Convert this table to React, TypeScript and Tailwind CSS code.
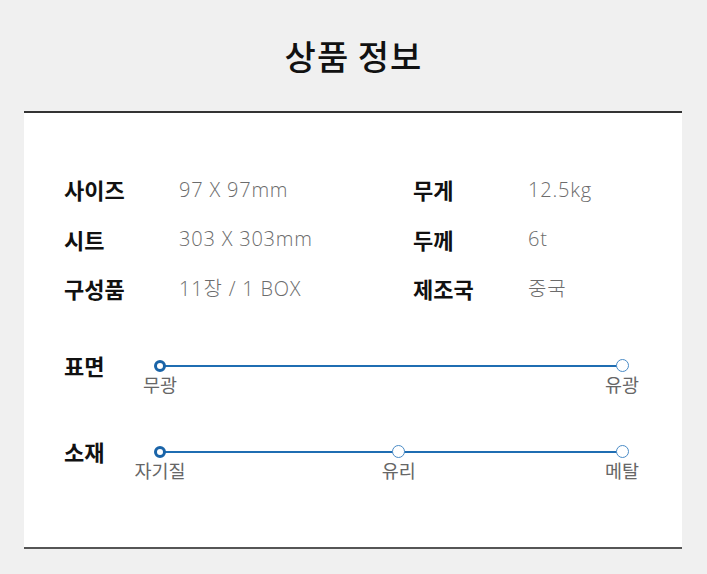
const specs = [
  ["사이즈", "97 X 97mm", "무게", "12.5kg"],
  ["시트", "303 X 303mm", "두께", "6t"],
  ["구성품", "11장 / 1 BOX", "제조국", "중국"],
]

const scales = [
  { label: "표면", stops: [{ pos: 0, text: "무광" }, { pos: 100, text: "유광" }] },
  { label: "소재", stops: [{ pos: 0, text: "자기질" }, { pos: 51.7, text: "유리" }, { pos: 100, text: "메탈" }] },
]

const kr = { fontFamily: '"Noto Sans CJK KR", "Noto Sans", sans-serif' }
const val = { fontFamily: '"Open Sans", "Noto Sans CJK KR", sans-serif' }

function Scale({ label, stops }: { label: string; stops: { pos: number; text: string }[] }) {
  return (
    <div className="flex items-start h-[86px]">
      <div className="w-[96px] h-[40px] flex items-center text-[22px] font-bold text-[#111]" style={kr}>{label}</div>
      {/* track */}
      <div className="relative w-[462px] h-[40px] flex items-center">
        <div className="w-full h-[2px] bg-[#1f6db2]" />
        {stops.map((s, i) => (
          <div key={s.text} className="absolute top-[13.5px] w-0 flex flex-col items-center" style={{ left: `${s.pos}%` }}>
            {i === 0 ? (
              <div className="shrink-0 w-[12px] h-[12px] my-[0.5px] rounded-full bg-white border-[3px] border-[#1a64a8]" />
            ) : (
              <div className="shrink-0 w-[13px] h-[13px] rounded-full bg-white border-[1.5px] border-[#4a8bc6]" />
            )}
            <div className="whitespace-nowrap text-[18.5px] leading-[24px] text-[#666]" style={kr}>{s.text}</div>
          </div>
        ))}
      </div>
    </div>
  )
}

export default function App() {
  return (
    <div className="w-[707px] h-[574px] bg-[#f0f0f0] overflow-hidden">
      {/* Title */}
      <div className="h-[111px] flex items-center justify-center">
        <h1 className="text-[34px] font-medium text-[#111] tracking-[1px]" style={kr}>상품 정보</h1>
      </div>
      {/* Panel */}
      <div className="ml-[24px] mr-[25px] h-[438px] bg-white border-t-2 border-[#333] border-b-2 border-b-[#555] pl-[40px]">
        <div className="pt-[52px] grid grid-cols-[115px_234px_115px_1fr]">
          {specs.map(row => (
            <div key={row[0]} className="contents">
              <div className="h-[49.5px] flex items-center text-[22px] font-bold text-[#111]" style={kr}>{row[0]}</div>
              <div className="h-[49.5px] flex items-center text-[20px] font-light tracking-[0.8px] text-[#6c6c6c]" style={val}>{row[1]}</div>
              <div className="h-[49.5px] flex items-center text-[22px] font-bold text-[#111]" style={kr}>{row[2]}</div>
              <div className="h-[49.5px] flex items-center text-[20px] font-light tracking-[0.8px] text-[#6c6c6c]" style={val}>{row[3]}</div>
            </div>
          ))}
        </div>
        <div className="mt-[32px]">
          {scales.map(s => <Scale key={s.label} label={s.label} stops={s.stops} />)}
        </div>
      </div>
    </div>
  )
}
